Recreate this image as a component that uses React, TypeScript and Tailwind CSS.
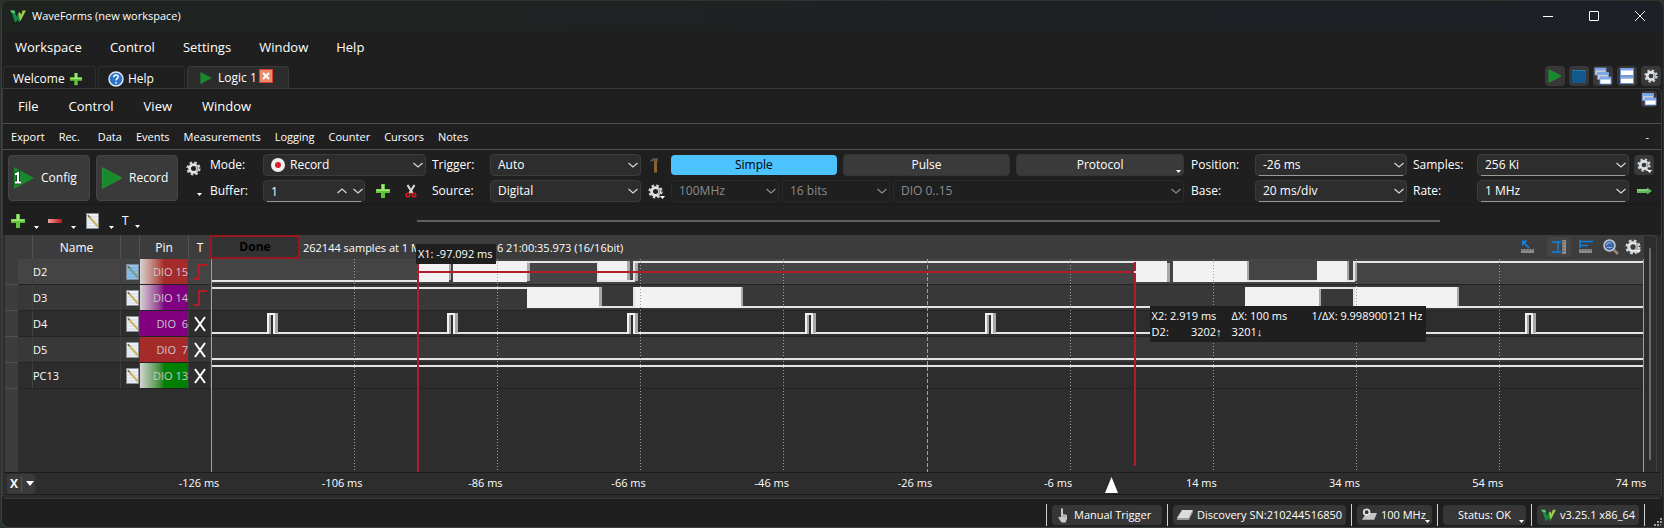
import React from "react";

type BoxProps = { className?: string };

function Logo({ className = "w-4 h-3" }: BoxProps) {
  return (
    <svg viewBox="0 0 16 12" className={`shrink-0 ${className}`}>
      <path d="M0 .5h4.500L6.500 7 8.500 2.500 11 8.500 9.500 12H8.500L7.500 9 6.200 12H4.800L1.500 2z" fill="#178a43" />
      <path d="M0 .5h4.500l.8 2.500H2z" fill="#5cc47c" />
      <path d="M8.500 2.500h1.800L11.200 5 12.500.500H16L10.500 11 9.300 8z" fill="#9cc84b" />
    </svg>
  );
}

function Gear({ className = "w-4 h-4" }: BoxProps) {
  return (
    <svg viewBox="0 0 16 16" className={className}>
      <circle cx="8" cy="8" r="6.300" fill="none" stroke="#c9ced2" strokeWidth="2.600" strokeDasharray="2.750 2.200" />
      <circle cx="8" cy="8" r="4.200" fill="none" stroke="#dfe3e6" strokeWidth="3" />
      <path d="M11 5a4.200 4.200 0 0 1 0 6" fill="none" stroke="#98a0a6" strokeWidth="1.500" />
    </svg>
  );
}

function Play({ className = "w-4 h-4" }: BoxProps) {
  return (
    <svg viewBox="0 0 16 16" className={className}>
      <path d="M1 .5L15 8 1 15.500z" fill="#178a2c" stroke="#2b9c3c" strokeWidth=".6" />
    </svg>
  );
}

function Plus({ className = "w-4 h-4" }: BoxProps) {
  return (
    <svg viewBox="0 0 16 16" className={className}>
      <path d="M6 1h4v5h5v4h-5v5H6v-5H1V6h5z" fill="#5fc436" />
      <path d="M7 1.500h2v5h5.500v1.500H1.500V6.500H7z" fill="#a6e67e" />
    </svg>
  );
}

function Minus() {
  return (
    <svg viewBox="0 0 16 16" className="w-4 h-4">
      <defs>
        <linearGradient id="minus">
          <stop offset="0" stopColor="#f0a0a0" />
          <stop offset="1" stopColor="#c01010" />
        </linearGradient>
      </defs>
      <rect x="1" y="6" width="14" height="4" fill="url(#minus)" />
    </svg>
  );
}

function Note({ active }: { active?: boolean }) {
  return (
    <svg viewBox="0 0 13 16" className="w-[13px] h-4 shrink-0">
      <rect x=".5" y=".5" width="12" height="15" fill={active ? "#8fc1ea" : "#eef2f7"} stroke="#8a8f95" strokeWidth=".6" />
      <path d="M1 4h11M1 7h11M1 10h11M1 13h11" stroke={active ? "#6aa5d8" : "#c3d3e6"} strokeWidth=".8" />
      <path d="M3 3.500L12 13.500" stroke={active ? "#7d9a7e" : "#cdb45a"} strokeWidth="2" />
      <path d="M1.800 2.200l1.800 1.800" stroke="#555" strokeWidth="1.200" />
    </svg>
  );
}

function Caret({ className = "" }: BoxProps) {
  return (
    <svg viewBox="0 0 5 3" className={`w-[5px] h-[3px] shrink-0 ${className}`}>
      <path d="M0 0h5L2.500 3z" fill="#fff" />
    </svg>
  );
}

function Chevron({ up, className = "" }: { up?: boolean; className?: string }) {
  return (
    <svg viewBox="0 0 10 6" className={`w-[10px] h-[6px] ${className}`}>
      <path d={up ? "M.5 5L5 1l4.500 4" : "M.5 1L5 5l4.500-4"} fill="none" stroke="currentColor" strokeWidth="1.200" />
    </svg>
  );
}

function Windows({ count = 3 }: { count?: number }) {
  return (
    <svg viewBox={count === 3 ? "0 0 18 18" : "2 4 16 14"} className={count === 3 ? "w-[18px] h-[18px]" : "w-4 h-3.5"}>
      {[0, 1, 2].slice(3 - count).map((i) => (
        <g key={i} transform={`translate(${i * 2.5} ${i * 4.5})`}>
          <rect x="1" y="1" width="11" height="7" fill={i === 2 ? "#fff" : "#c9cfd8"} stroke="#6f95d8" strokeWidth=".8" />
          <rect x="1" y="1" width="11" height="2.500" fill="#7fa6e6" />
        </g>
      ))}
    </svg>
  );
}

function Scissors() {
  return (
    <svg viewBox="0 0 12 14" className="w-3 h-[14px]">
      <path d="M2.500 1l5 8M9.500 1L4.500 9" stroke="#d8d8d8" strokeWidth="2.200" />
      <circle cx="3" cy="11" r="1.800" fill="none" stroke="#d02020" strokeWidth="1.500" />
      <circle cx="9" cy="11" r="1.800" fill="none" stroke="#d02020" strokeWidth="1.500" />
    </svg>
  );
}

function Hammer() {
  return (
    <svg viewBox="0 0 12 16" className="w-3 h-4">
      <path d="M5 4h3v11.500H5z" fill="#8a6430" />
      <path d="M1 4.500C2 1.500 4 1 9 1.200V4H4.500z" fill="#55585a" />
    </svg>
  );
}

const field =
  "w-full h-full appearance-none rounded border border-[#3c3c3c] bg-[#2d2d2d] pl-[7px] pr-5 text-xs leading-4 text-white outline-none disabled:border-[#2b2b2b] disabled:bg-[#1f1f1f] disabled:text-[#8c8c8c] disabled:opacity-100";

type SelectProps = {
  label: string;
  value: string;
  className?: string;
  disabled?: boolean;
  editable?: boolean;
  id?: string;
};

function Select({ label, value, className = "", disabled, editable, id }: SelectProps) {
  return (
    <div className={`relative h-[22px] ${className}`}>
      <select id={id} aria-label={label} disabled={disabled} defaultValue={value} className={field}>
        <option>{value}</option>
      </select>
      {editable && <span className="absolute inset-x-1 bottom-0 h-px bg-[#9a9a9a]" />}
      <Chevron className={`absolute right-[3px] top-2 pointer-events-none ${disabled ? "text-[#8c8c8c]" : "text-[#d5d5d5]"}`} />
    </div>
  );
}

function TitleBar() {
  return (
    <header className="flex items-center h-[30px] pl-2 bg-linear-to-r from-[#1f2320] to-[#1c2026]">
      <Logo />
      <h1 className="ml-1.5 text-[11px]">WaveForms (new workspace)</h1>
      <div className="ml-auto flex">
        <button aria-label="Minimize" className="flex justify-center items-center w-[46px] h-[30px]">
          <svg viewBox="0 0 10 10" className="w-[10px] h-[10px]"><path d="M0 5.500h10" stroke="#fff" /></svg>
        </button>
        <button aria-label="Maximize" className="flex justify-center items-center w-[46px] h-[30px]">
          <svg viewBox="0 0 10 10" className="w-[10px] h-[10px]"><rect x=".5" y=".5" width="9" height="9" rx=".5" fill="none" stroke="#fff" /></svg>
        </button>
        <button aria-label="Close" className="flex justify-center items-center w-[46px] h-[30px]">
          <svg viewBox="0 0 10 10" className="w-[10px] h-[10px]"><path d="M0 0l10 10M10 0L0 10" stroke="#fff" /></svg>
        </button>
      </div>
    </header>
  );
}

function Tabs() {
  const round = "flex justify-center items-center w-5 h-5 rounded bg-[#383838]";
  return (
    <div className="flex items-end h-6 pl-px pr-0.5 text-xs">
      <button className="flex items-center w-[93px] h-[22px] pt-0.5 pl-[9px] gap-1 rounded-t border border-b-0 border-[#2e2e2e]">
        Welcome <Plus className="w-3.5 h-3.5" />
      </button>
      <button className="flex items-center w-[87px] h-[22px] pt-0.5 ml-0.5 pl-[9px] gap-1 rounded-t border border-b-0 border-[#2e2e2e]">
        <svg viewBox="0 0 16 16" className="w-4 h-4">
          <circle cx="8" cy="8" r="7" fill="#2a74c9" stroke="#dfe8f2" strokeWidth="1.500" />
          <path d="M5.800 6.300c0-3 4.600-2.800 4.400-.2C10 7.700 8 7.600 8 9.500M8 11v1.500" fill="none" stroke="#fff" strokeWidth="1.500" />
        </svg>
        Help
      </button>
      <div className="flex items-center w-[102px] h-[22px] ml-0.5 pl-3 gap-1.5 rounded-t border border-b-0 border-[#3a3a3a] bg-[#2c2c2c]">
        <Play className="w-3 h-3" />
        <button>Logic 1</button>
        <button aria-label="Close tab" className="flex justify-center items-center w-[14px] h-[14px] -ml-1 -mt-1 border border-[#d8422c] bg-[#e88c68]">
          <svg viewBox="0 0 8 8" className="w-2 h-2"><path d="M1 1l6 6M7 1L1 7" stroke="#fff" strokeWidth="1.800" /></svg>
        </button>
      </div>
      <div className="ml-auto mb-0.5 flex gap-1">
        <button aria-label="Run all" className={round}><Play className="w-3.5 h-3.5" /></button>
        <button aria-label="Stop all" className={round}><span className="w-[14px] h-[13px] bg-[#135a8c] border-t border-[#2c73a4]" /></button>
        <button aria-label="Cascade" className={round}><Windows /></button>
        <button aria-label="Tile" className={round}>
          <svg viewBox="0 0 14 16" className="w-3.5 h-4">
            <rect x=".5" y=".5" width="13" height="7" fill="#fff" stroke="#7096d8" />
            <path d="M1 1.500h12M1 9.500h12" stroke="#84aaea" strokeWidth="2" />
            <rect x=".5" y="8.500" width="13" height="7" fill="none" stroke="#7096d8" />
            <rect x="1" y="10.500" width="12" height="4.500" fill="#fff" />
          </svg>
        </button>
        <button aria-label="Settings" className={round}><Gear className="w-3.5 h-3.5" /></button>
      </div>
    </div>
  );
}

function Controls() {
  const big = "flex items-center gap-1.5 h-[46px] rounded border border-[#464646] bg-[#3a3a3a]";
  const mode = "relative h-[22px] flex-1 rounded border border-[#353535] bg-[#3a3a3a]";
  return (
    <div className="flex items-center h-[55px] pt-0.5 pl-[5px] pr-2 border-b border-[#191919] text-xs">
      <button className={`${big} w-[82px] pl-1`}>
        <svg viewBox="0 0 22 22" className="w-[22px] h-[22px]">
          <path d="M1 0L21 11 1 22z" fill="#178a2c" />
          <path d="M2 7.500l3-1.500v9.500M2 15.500h6" fill="none" stroke="#0c3d16" strokeWidth="3.500" />
          <path d="M2 7.500l3-1.500v9.500M2 15.500h6" fill="none" stroke="#fff" strokeWidth="2" />
        </svg>
        Config
      </button>
      <button className={`${big} w-[82px] ml-1.5 pl-1`}>
        <Play className="w-[22px] h-[22px]" />
        Record
      </button>
      <button aria-label="Acquisition options" className="flex items-end w-4 ml-2 h-9 relative">
        <Gear className="w-[15px] h-[15px] mb-5" />
        <Caret className="absolute right-0 bottom-0" />
      </button>
      <div className="grid grid-cols-[53px_163px] gap-y-1 items-center ml-2">
        <label htmlFor="mode">Mode:</label>
        <div className="relative h-[22px]">
          <select id="mode" defaultValue="Record" className={`${field} pl-[26px]`}>
            <option>Record</option>
          </select>
          <svg viewBox="0 0 14 14" className="absolute left-2 top-1 w-3.5 h-3.5 pointer-events-none">
            <circle cx="7" cy="7" r="7" fill="#f0f0f0" />
            <circle cx="7" cy="7" r="3" fill="#d8202a" />
          </svg>
          <Chevron className="absolute right-[3px] top-2 text-[#d5d5d5] pointer-events-none" />
        </div>
        <label htmlFor="buffer">Buffer:</label>
        <div className="flex items-center">
          <div className="relative w-[102px] h-[22px]">
            <input id="buffer" defaultValue="1" className={field} />
            <span className="absolute inset-x-1 bottom-0 h-px bg-[#9a9a9a]" />
            <div className="absolute right-0.5 inset-y-0 flex items-center gap-1.5 text-[#d5d5d5]">
              <button aria-label="Next buffer"><Chevron up /></button>
              <button aria-label="Previous buffer"><Chevron /></button>
            </div>
          </div>
          <button aria-label="Add buffer" className="ml-2.5"><Plus /></button>
          <button aria-label="Clear buffers" className="ml-3.5"><Scissors /></button>
        </div>
      </div>
      <div className="grid grid-cols-[58px_151px_30px] gap-y-1 items-center ml-1.5">
        <label htmlFor="trigger">Trigger:</label>
        <Select id="trigger" label="Trigger" value="Auto" />
        <button aria-label="Force trigger" className="pl-2"><Hammer /></button>
        <label htmlFor="source">Source:</label>
        <Select id="source" label="Source" value="Digital" />
        <button aria-label="Source options" className="relative pl-[7px] w-6"><Gear className="w-[15px] h-[15px]" /><Caret className="absolute right-0 bottom-0" /></button>
      </div>
      <div className="flex-1 flex flex-col gap-1">
        <div className="flex gap-1.5">
          <button className="h-5 my-px flex-1 rounded bg-[#4cc2ff] text-black">Simple</button>
          <button className={mode}>Pulse</button>
          <button className={mode}>Protocol<Caret className="absolute right-0.5 bottom-0.5" /></button>
        </div>
        <div className="flex gap-[3px]">
          <Select label="Frequency" value="100MHz" className="w-[108px]" disabled />
          <Select label="Bits" value="16 bits" className="w-[108px]" disabled />
          <Select label="Inputs" value="DIO 0..15" className="flex-1" disabled />
        </div>
      </div>
      <div className="grid grid-cols-[64px_152px_70px_152px_24px] gap-y-1 items-center ml-[7px]">
        <label htmlFor="position">Position:</label>
        <Select id="position" label="Position" value="-26 ms" editable />
        <label htmlFor="samples" className="pl-1.5">Samples:</label>
        <Select id="samples" label="Samples" value="256 Ki" editable />
        <button aria-label="Sample options" className="relative flex justify-center items-center w-5 h-5 ml-[5px] rounded bg-[#383838]">
          <Gear className="w-3.5 h-3.5" /><Caret className="absolute right-0.5 bottom-0.5" />
        </button>
        <label htmlFor="base">Base:</label>
        <Select id="base" label="Base" value="20 ms/div" editable />
        <label htmlFor="rate" className="pl-1.5">Rate:</label>
        <Select id="rate" label="Rate" value="1 MHz" editable />
        <button aria-label="Apply" className="ml-2">
          <svg viewBox="0 0 15 8" className="w-[15px] h-2"><path d="M0 2h10V.500L15 4l-5 3.500V6H0z" fill="#5fb85a" /><path d="M0 3h11" stroke="#a8e09c" /></svg>
        </button>
      </div>
    </div>
  );
}

function ToolRow() {
  return (
    <div className="flex items-center h-[30px] pl-[7px] pt-0.5 text-xs">
      <button aria-label="Add channel" className="flex items-end gap-2"><Plus /><Caret /></button>
      <button aria-label="Remove channel" className="flex items-end gap-2 ml-2"><Minus /><Caret /></button>
      <button aria-label="Edit channel" className="flex items-end gap-2.5 ml-2.5"><Note /><Caret /></button>
      <button className="flex items-end gap-1.5 ml-2">T<Caret className="mb-px" /></button>
      <div className="flex-1 h-0.5 ml-[277px] mr-[221px] bg-[#606060]" />
    </div>
  );
}

const channels = [
  { name: "D2", pin: "DIO 15", row: "bg-[#444444]", color: "bg-linear-to-r from-[#d4d4d4] to-[#a52a2a] to-50%", edge: true },
  { name: "D3", pin: "DIO 14", row: "bg-[#383838]", color: "bg-linear-to-r from-[#d4d4d4] to-[#800080] to-50%", edge: true },
  { name: "D4", pin: "DIO  6", row: "bg-[#2d2d2d]", color: "bg-[#800080]", edge: false },
  { name: "D5", pin: "DIO  7", row: "bg-[#383838]", color: "bg-[#a52a2a]", edge: false },
  { name: "PC13", pin: "DIO 13", row: "bg-[#2d2d2d]", color: "bg-linear-to-r from-[#d4d4d4] to-[#008000] to-50%", edge: false },
];

function ChannelTable() {
  const th = "h-6 p-0 pt-0.5 font-normal border-r border-[#505050]";
  const td = "p-0 border-r border-b border-r-[#3f3f3f] border-b-[#242424]";
  return (
    <div className="flex flex-col w-[206px] shrink-0">
      <table className="w-full table-fixed border-separate border-spacing-0 text-[11px]">
        <colgroup>
          <col className="w-[13px]" />
          <col className="w-[15px]" />
          <col className="w-[88px]" />
          <col className="w-[19px]" />
          <col className="w-[49px]" />
          <col className="w-[22px]" />
        </colgroup>
        <thead className="bg-[#3c3c3c] text-xs">
          <tr>
            <th colSpan={2} className={th} />
            <th className={th}>Name</th>
            <th className={th} />
            <th className={th}>Pin</th>
            <th className="h-6 p-0 pt-0.5 font-normal">T</th>
          </tr>
        </thead>
        <tbody>
          {channels.map((c) => (
            <tr key={c.name} className={`h-[26px] ${c.row}`}>
              <td className="p-0 bg-[#3c3c3c] border-b border-[#505050]" />
              <td className={td} />
              <td className={`${td} pt-0.5`}>{c.name}</td>
              <td className={td}><div className="flex justify-end"><Note active={c.name === "D2"} /></div></td>
              <td className={`${td} pt-0.5 ${c.color} text-right whitespace-pre text-[#c8c8c8]`}>{c.pin}</td>
              <td className={td}>
                <svg viewBox="0 0 14 16" className="w-3.5 h-4 mx-auto">
                  {c.edge ? (
                    <path d="M0 15h6V1h8" fill="none" stroke="#b01c28" strokeWidth="2" />
                  ) : (
                    <path d="M2 1l10 14M12 1L2 15" fill="none" stroke="#fff" strokeWidth="2" />
                  )}
                </svg>
              </td>
            </tr>
          ))}
        </tbody>
      </table>
      <div className="flex-1 w-[13px] bg-[#3c3c3c]" />
    </div>
  );
}

// [x, y, width, height, fill]
type Bar = [number, number, number, number, string];

const LINE = "#e4e4e4";
const FULL = "#f2f2f2";
const EDGE = "#a8a8a8";

const bars: Bar[] = [
  // D2
  [0, 21, 208, 2, LINE],
  [208, 2, 30, 21, FULL],
  [238, 2, 2, 19, EDGE],
  [242, 2, 74, 21, FULL],
  [316, 4, 3, 18, EDGE],
  [316, 2, 72, 2, LINE],
  [386, 2, 2, 21, LINE],
  [388, 2, 28, 21, FULL],
  [416, 2, 3, 19, EDGE],
  [388, 21, 36, 2, LINE],
  [422, 2, 2, 21, LINE],
  [424, 4, 3, 18, EDGE],
  [422, 2, 502, 2, LINE],
  [924, 2, 32, 21, FULL],
  [956, 4, 3, 19, EDGE],
  [962, 2, 74, 21, FULL],
  [1036, 2, 2, 19, EDGE],
  [1036, 21, 108, 2, LINE],
  [1106, 2, 30, 21, FULL],
  [1136, 2, 2, 19, EDGE],
  [1142, 2, 2, 21, LINE],
  [1144, 4, 2, 18, EDGE],
  [1142, 2, 290, 2, LINE],
  // D3
  [0, 28, 316, 2, LINE],
  [316, 28, 72, 21, FULL],
  [388, 28, 3, 19, EDGE],
  [388, 47, 36, 2, LINE],
  [422, 28, 2, 21, LINE],
  [424, 28, 106, 21, FULL],
  [530, 28, 2, 19, EDGE],
  [530, 47, 504, 2, LINE],
  [1034, 28, 74, 21, FULL],
  [1108, 30, 2, 19, EDGE],
  [1108, 28, 36, 2, LINE],
  [1142, 28, 2, 21, LINE],
  [1144, 28, 102, 21, FULL],
  [1246, 28, 2, 19, EDGE],
  [1246, 47, 186, 2, LINE],
  // D4, D5, PC13 idle levels
  [0, 73, 1432, 2, LINE],
  [0, 99, 1432, 2, LINE],
  [0, 106, 1432, 2, LINE],
];

const pulses = [56, 236, 416, 594, 774, 954, 1134, 1314];

function Plot() {
  return (
    <div className="relative flex-1">
      <svg viewBox="0 0 1433 213" preserveAspectRatio="none" shapeRendering="crispEdges" className="block w-full h-[213px]">
        {["#444444", "#383838", "#2d2d2d", "#383838", "#2d2d2d"].map((fill, i) => (
          <g key={i}>
            <rect x="0" y={i * 26} width="1433" height="26" fill={fill} />
            <rect x="0" y={i * 26 + 25} width="1433" height="1" fill="#242424" />
          </g>
        ))}
        {bars.map(([x, y, w, h, fill], i) => (
          <rect key={i} x={x} y={y} width={w} height={h} fill={fill} />
        ))}
        {pulses.map((x) => (
          <g key={x}>
            <rect x={x} y="54" width="8" height="21" fill={FULL} />
            <rect x={x + 2} y="56" width="2" height="19" fill={EDGE} />
            <rect x={x + 4} y="56" width="2" height="19" fill="#2d2d2d" />
            <rect x={x + 8} y="54" width="3" height="20" fill={EDGE} />
          </g>
        ))}
        <path d="M.5 0V213M1432.500 0V213" stroke="#a0a0a0" />
        {[1, 2, 3, 4, 6, 7, 8, 9].map((i) => (
          <path key={i} d={`M${Math.floor(i * 143.2) + 0.5} 0V213`} stroke="#a0a0a0" strokeDasharray="1 2" />
        ))}
        <path d="M716.500 0V213" stroke="#a0a0a0" strokeDasharray="4 2" />
        <path d="M207 5V213M924 3V207M208 13H924" stroke="#b01c28" strokeWidth="2" fill="none" />
        <rect x="923" y="12" width="2" height="2" fill="#fff" />
      </svg>
      <div className="absolute left-[14.3%] -top-[15px] h-5 pl-0.5 pr-1 bg-[#1f1f1f] text-[11px] leading-5 whitespace-nowrap">X1: -97.092 ms</div>
      <div className="absolute left-[65.5%] top-[47px] grid grid-cols-[80px_80px_112px] h-9 px-0.5 py-0.5 bg-[#1f1f1f] text-[11px] leading-4 whitespace-pre">
        <span>X2: 2.919 ms</span>
        <span>ΔX: 100 ms</span>
        <span>1/ΔX: 9.998900121 Hz</span>
        <span className="flex justify-between pr-2.5"><span>D2:</span><span>3202↑</span></span>
        <span>3201↓</span>
      </div>
    </div>
  );
}

function PlotHeader() {
  return (
    <div className="flex items-center h-6 bg-[#3c3c3c] text-[11px]">
      <button className="w-[90px] h-6 -ml-px border-2 border-[#981820] bg-[#333333] text-black font-bold text-xs">Done</button>
      <span className="ml-[3px] pt-0.5 whitespace-nowrap">262144 samples at 1 MHz | 2026-02-16 21:00:35.973 (16/16bit)</span>
      <div className="ml-auto flex items-center pr-[3px]">
        <button aria-label="Cursors" className="mr-3">
          <svg viewBox="0 0 14 14" className="w-3.5 h-3.5">
            <rect x="0" y="9" width="13" height="4" fill="#8c8c8c" />
            <path d="M2 9v2M5 9v2M8 9v2M11 9v2" stroke="#5a5a5a" />
            <path d="M8 8L2.500 2" fill="none" stroke="#1182e0" strokeWidth="1.600" />
            <path d="M1 .5h5.500L1 6z" fill="#1182e0" />
          </svg>
        </button>
        <button aria-label="Vertical ruler" className="flex justify-center items-center w-6 h-5 rounded bg-[#444444] mr-2">
          <svg viewBox="0 0 15 14" className="w-[15px] h-3.5">
            <rect x="10" y="0" width="4" height="14" fill="#8c8c8c" />
            <path d="M10 2h2M10 5h2M10 8h2M10 11h2" stroke="#5a5a5a" />
            <path d="M0 2h9M0 12h9M6 2v10" fill="none" stroke="#1182e0" strokeWidth="1.500" />
          </svg>
        </button>
        <button aria-label="Measure" className="mr-2.5">
          <svg viewBox="0 0 14 14" className="w-3.5 h-3.5">
            <rect x="0" y="9" width="13" height="4" fill="#8c8c8c" />
            <path d="M2 9v2M5 9v2M8 9v2M11 9v2" stroke="#5a5a5a" />
            <path d="M1 0v8M1 1.500h13M1 5.500h8" fill="none" stroke="#1182e0" strokeWidth="1.500" />
          </svg>
        </button>
        <button aria-label="Zoom" className="mr-1.5">
          <svg viewBox="0 0 16 16" className="w-4 h-4">
            <path d="M11 11l4 4" stroke="#9a8a70" strokeWidth="2.500" />
            <circle cx="6.500" cy="6.500" r="5.500" fill="#3f68a8" stroke="#c3cbd4" strokeWidth="1.500" />
            <path d="M3.500 6c1-2.500 3-3 5-2M4 8.500h5" fill="none" stroke="#8fb0de" strokeWidth="1.200" />
          </svg>
        </button>
        <button aria-label="Plot options" className="relative"><Gear /><Caret className="absolute right-0 bottom-0.5" /></button>
      </div>
    </div>
  );
}

function Axis() {
  return (
    <div className="flex items-center h-[23px] mx-px border-y border-[#1c1c1c] text-[11px]">
      <div className="flex items-center w-7 h-5 ml-[3px] rounded bg-[#3a3a3a]">
        <button className="w-[15px] h-4 border-r border-[#555] text-xs font-bold leading-4">X</button>
        <button aria-label="Axis" className="pl-1"><svg viewBox="0 0 8 5" className="w-2 h-[5px]"><path d="M0 0h8L4 5z" fill="#fff" /></svg></button>
      </div>
      <div className="relative flex-1 flex justify-between ml-[164px] mr-[29px]">
        {[-126, -106, -86, -66, -46, -26, -6, 14, 34, 54, 74].map((t) => (
          <div key={t} className="flex justify-center w-0">
            <span className="whitespace-nowrap">{t} ms</span>
          </div>
        ))}
        <svg viewBox="0 0 13 16" className="absolute left-[63.3%] top-0.5 w-[13px] h-4"><path d="M6.500 0L13 16H0z" fill="#fff" /></svg>
      </div>
    </div>
  );
}

function StatusBar() {
  const btn = "relative flex items-center h-5 px-1 gap-1 rounded bg-[#363636] whitespace-nowrap";
  const cell = "flex items-center h-[22px] px-[5px] border-l border-[#d0d0d0]";
  return (
    <footer className="flex justify-end items-center h-7 pt-1 text-[11px]">
      <div className={cell}>
        <button className={`${btn} w-[110px]`}>
          <svg viewBox="0 0 14 16" className="w-3.5 h-4 shrink-0">
            <path d="M5 1.500c1-.7 2 0 2 1V7l4 1v4l-1.500 3.500h-4L2.500 11l.5-1.500 2 1z" fill="#c9c9c9" />
            <path d="M7 8v2M9 8.500v2" stroke="#777" strokeWidth=".7" />
          </svg>
          Manual Trigger
        </button>
      </div>
      <div className={cell}>
        <button className={`${btn} w-[173px]`}>
          <svg viewBox="0 0 16 12" className="w-4 h-3 shrink-0"><path d="M5 1h11l-4 8H0z" fill="#dcdcdc" /><path d="M0 9h12l4-8v2l-4 8H0z" fill="#9a9a9a" /></svg>
          Discovery SN:210244516850
        </button>
      </div>
      <div className={cell}>
        <button className={`${btn} w-[75px]`}>
          <svg viewBox="0 0 17 16" className="w-4 h-4 shrink-0">
            <path d="M6 6h11l-3 7H1z" fill="#c4c4c4" />
            <circle cx="6" cy="5" r="3" fill="#333" stroke="#e0e0e0" strokeWidth="2" />
          </svg>
          100 MHz<Caret className="absolute right-0.5 bottom-0.5" />
        </button>
      </div>
      <div className={cell}>
        <button className={`${btn} w-[83px] justify-center`}>Status: OK<Caret className="absolute right-0.5 bottom-0.5" /></button>
      </div>
      <div className={cell}>
        <button className={`${btn} w-[102px]`}><Logo className="w-[15px] h-3" />v3.25.1 x86_64</button>
      </div>
      <div className="flex items-end justify-end w-[19px] h-[22px] pr-px border-l border-[#d0d0d0]">
        <svg viewBox="0 0 8 8" className="w-2 h-2"><path d="M6 0h2v2H6zM3 3h2v2H3zM6 3h2v2H6zM0 6h2v2H0zM3 6h2v2H3zM6 6h2v2H6z" fill="#a0a0a0" /></svg>
      </div>
    </footer>
  );
}

export default function App() {
  return (
    <div className="bg-[#2a332c] pt-px px-px font-['Open_Sans',sans-serif] text-white">
      <div className="rounded-lg overflow-hidden border-l border-b border-[#3a3f3b] bg-[#1f1f1f]">
        <TitleBar />
        <nav className="flex items-center gap-7 h-[33px] pl-[13px] text-[13px]">
          {["Workspace", "Control", "Settings", "Window", "Help"].map((m) => (
            <button key={m}>{m}</button>
          ))}
        </nav>
        <Tabs />
        <main className="mr-px border border-[#3a3a3a] rounded-tr rounded-b">
          <nav className="flex items-center gap-[30px] h-[35px] pt-0.5 pl-[15px] pr-1 border-b border-[#505050] text-[13px]">
            {["File", "Control", "View", "Window"].map((m) => (
              <button key={m}>{m}</button>
            ))}
            <button aria-label="Undock" className="flex justify-center items-center self-start w-4 h-4 ml-auto rounded bg-[#383838]"><Windows count={2} /></button>
          </nav>
          <nav className="flex items-center gap-3.5 h-[26px] pt-0.5 pl-2 border-b border-[#505050] text-[11px]">
            {["Export", "Rec.", "Data", "Events", "Measurements", "Logging", "Counter", "Cursors", "Notes"].map((m) => (
              <button key={m} className={m === "Data" ? "ml-1" : ""}>{m}</button>
            ))}
            <span className="ml-auto mr-3">-</span>
          </nav>
          <Controls />
          <ToolRow />
          <div className="bg-[#2d2d2d]">
            <div className="flex pl-0.5 pr-1">
              <ChannelTable />
              <div className="flex-1 flex flex-col">
                <PlotHeader />
                <Plot />
              </div>
              <div className="w-[13px] flex justify-center py-3 rounded-tr border-r border-t border-[#404040]">
                <div className="w-0.5 rounded bg-[#6c6c6c]" />
              </div>
            </div>
            <Axis />
            <div className="h-[3px]" />
          </div>
        </main>
        <StatusBar />
      </div>
    </div>
  );
}
